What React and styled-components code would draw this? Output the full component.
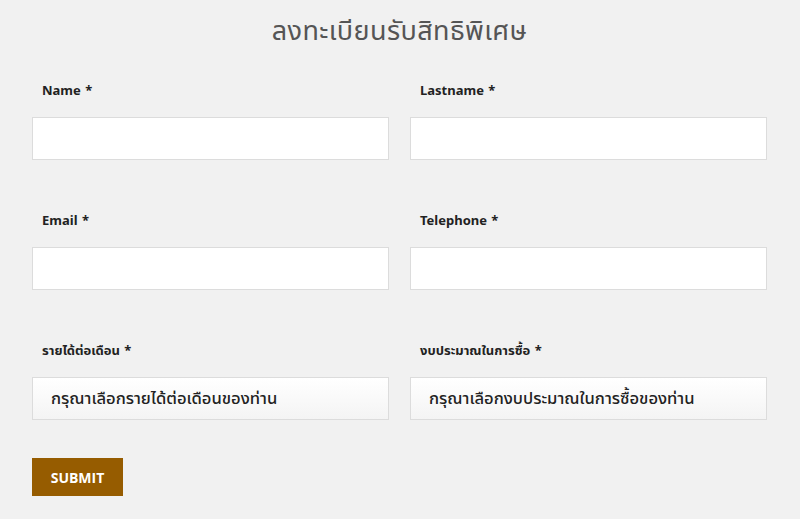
import React from "react";
import styled, { createGlobalStyle } from "styled-components";

const Global = createGlobalStyle`
  html, body { margin: 0; padding: 0; background: #f1f1f1; }
  body { font-family: "Open Sans", "Noto Sans", "Noto Sans Thai", sans-serif; }
  * { box-sizing: border-box; }
`;

const Page = styled.div`
  width: 800px;
  height: 519px;
  background: #f1f1f1;
  padding: 14px 33px 0 32px;
`;

const Title = styled.h1`
  margin: 0 0 34px;
  height: 32px;
  line-height: 32px;
  text-align: center;
  font-family: "Noto Sans", "Noto Sans Thai", sans-serif;
  font-weight: 400;
  font-size: 27px;
  color: #555;
  letter-spacing: 0.4px;
`;

const Grid = styled.div`
  display: grid;
  grid-template-columns: 1fr 1fr;
  column-gap: 21px;
  row-gap: 50px;
`;

const Field = styled.div`
  display: flex;
  flex-direction: column;
`;

const Label = styled.label`
  height: 20px;
  line-height: 20px;
  margin-bottom: 17px;
  padding-left: 10px;
  font-family: "Noto Sans", "Noto Sans Thai", sans-serif;
  font-size: 13px;
  font-weight: 700;
  color: #222;
  word-spacing: 1px;
`;

const Input = styled.input`
  height: 43px;
  width: 100%;
  border: 1px solid #dcdcdc;
  background: #fff;
  padding: 0 18px;
  font-size: 15px;
  outline: none;
`;

const Select = styled.div`
  height: 43px;
  width: 100%;
  border: 1px solid #dcdcdc;
  background: linear-gradient(to bottom, #ffffff 0%, #f4f4f4 100%);
  padding: 0 18px;
  display: flex;
  align-items: center;
  font-family: "Noto Sans", "Noto Sans Thai", sans-serif;
  font-size: 16.6px;
  font-weight: 500;
  color: #222;
`;

const Submit = styled.button`
  margin-top: 38px;
  width: 91px;
  height: 38px;
  border: none;
  background: #965c00;
  color: #fff;
  font-family: "Open Sans", "Noto Sans", sans-serif;
  font-weight: 700;
  font-size: 14px;
  cursor: pointer;
`;

export default function App() {
  return (
    <>
      <Global />
      <Page>
        <Title>ลงทะเบียนรับสิทธิพิเศษ</Title>
        <Grid>
          <Field>
            <Label>Name *</Label>
            <Input />
          </Field>
          <Field>
            <Label>Lastname *</Label>
            <Input />
          </Field>
          <Field>
            <Label>Email *</Label>
            <Input />
          </Field>
          <Field>
            <Label>Telephone *</Label>
            <Input />
          </Field>
          <Field>
            <Label>รายได้ต่อเดือน *</Label>
            <Select>กรุณาเลือกรายได้ต่อเดือนของท่าน</Select>
          </Field>
          <Field>
            <Label>งบประมาณในการซื้อ *</Label>
            <Select>กรุณาเลือกงบประมาณในการซื้อของท่าน</Select>
          </Field>
        </Grid>
        <Submit>SUBMIT</Submit>
      </Page>
    </>
  );
}
